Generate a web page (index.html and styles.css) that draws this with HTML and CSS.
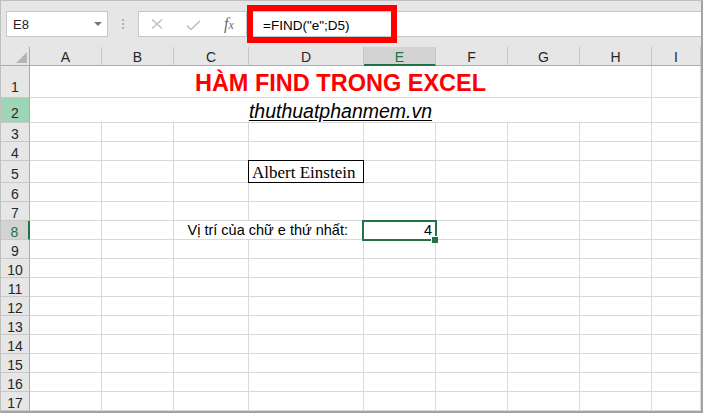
FILE: index.html
```html
<!DOCTYPE html>
<html lang="vi">
<head>
<meta charset="utf-8">
<title>HÀM FIND TRONG EXCEL</title>
<link rel="stylesheet" href="styles.css">
</head>
<body>
<div class="window">
  <div class="toolbar">
    <div class="namebox"><span>E8</span><span class="caret"></span></div>
    <div class="grip"><i></i><i></i><i></i></div>
    <div class="fxbox">
      <svg class="ico-x" width="12" height="12" viewBox="0 0 12 12"><path d="M1 1.5L11 10.5M11 1.5L1 10.5" stroke="#bdbdbd" stroke-width="1.4" fill="none"/></svg>
      <svg class="ico-check" width="15" height="11" viewBox="0 0 15 11"><path d="M1 5.5L5 9.5L14 1" stroke="#bdbdbd" stroke-width="1.6" fill="none"/></svg>
      <span class="fx">f<span class="fx-x">x</span></span>
    </div>
    <div class="formula"><span>=FIND("e";D5)</span><div class="mark"></div></div>
  </div>
  <div class="sheet">
    <div class="corner"><i></i></div>
    <div class="ch">A</div><div class="ch">B</div><div class="ch">C</div><div class="ch">D</div><div class="ch sel">E</div><div class="ch">F</div><div class="ch">G</div><div class="ch">H</div><div class="ch">I</div>

    <div class="rh r1">1</div><div class="c title">HÀM FIND TRONG EXCEL</div><div class="c"></div>
    <div class="rh hl r2">2</div><div class="c site"><span>thuthuatphanmem.vn</span></div><div class="c"></div>
    <div class="rh">3</div><div class="c"></div><div class="c"></div><div class="c"></div><div class="c"></div><div class="c"></div><div class="c"></div><div class="c"></div><div class="c"></div><div class="c"></div>
    <div class="rh">4</div><div class="c"></div><div class="c"></div><div class="c"></div><div class="c"></div><div class="c"></div><div class="c"></div><div class="c"></div><div class="c"></div><div class="c"></div>
    <div class="rh r5">5</div><div class="c"></div><div class="c"></div><div class="c"></div><div class="c boxed">Albert Einstein</div><div class="c"></div><div class="c"></div><div class="c"></div><div class="c"></div><div class="c"></div>
    <div class="rh">6</div><div class="c"></div><div class="c"></div><div class="c"></div><div class="c"></div><div class="c"></div><div class="c"></div><div class="c"></div><div class="c"></div><div class="c"></div>
    <div class="rh">7</div><div class="c"></div><div class="c"></div><div class="c"></div><div class="c"></div><div class="c"></div><div class="c"></div><div class="c"></div><div class="c"></div><div class="c"></div>
    <div class="rh sel">8</div><div class="c"></div><div class="c"></div><div class="c label">Vị trí của chữ e thứ nhất:</div><div class="c active">4</div><div class="c"></div><div class="c"></div><div class="c"></div><div class="c"></div>
    <div class="rh">9</div><div class="c"></div><div class="c"></div><div class="c"></div><div class="c"></div><div class="c"></div><div class="c"></div><div class="c"></div><div class="c"></div><div class="c"></div>
    <div class="rh">10</div><div class="c"></div><div class="c"></div><div class="c"></div><div class="c"></div><div class="c"></div><div class="c"></div><div class="c"></div><div class="c"></div><div class="c"></div>
    <div class="rh">11</div><div class="c"></div><div class="c"></div><div class="c"></div><div class="c"></div><div class="c"></div><div class="c"></div><div class="c"></div><div class="c"></div><div class="c"></div>
    <div class="rh">12</div><div class="c"></div><div class="c"></div><div class="c"></div><div class="c"></div><div class="c"></div><div class="c"></div><div class="c"></div><div class="c"></div><div class="c"></div>
    <div class="rh">13</div><div class="c"></div><div class="c"></div><div class="c"></div><div class="c"></div><div class="c"></div><div class="c"></div><div class="c"></div><div class="c"></div><div class="c"></div>
    <div class="rh">14</div><div class="c"></div><div class="c"></div><div class="c"></div><div class="c"></div><div class="c"></div><div class="c"></div><div class="c"></div><div class="c"></div><div class="c"></div>
    <div class="rh">15</div><div class="c"></div><div class="c"></div><div class="c"></div><div class="c"></div><div class="c"></div><div class="c"></div><div class="c"></div><div class="c"></div><div class="c"></div>
    <div class="rh">16</div><div class="c"></div><div class="c"></div><div class="c"></div><div class="c"></div><div class="c"></div><div class="c"></div><div class="c"></div><div class="c"></div><div class="c"></div>
    <div class="rh">17</div><div class="c"></div><div class="c"></div><div class="c"></div><div class="c"></div><div class="c"></div><div class="c"></div><div class="c"></div><div class="c"></div><div class="c"></div>
  </div>
</div>
</body>
</html>
```
FILE: styles.css
```css
* { box-sizing: border-box; }
body { margin: 0; background: #fff; font-family: "Liberation Sans", Arial, sans-serif; }

.window {
  width: 703px; height: 413px;
  border-style: solid; border-width: 1px 2px 2px 1px;
  border-color: #bfbfbf #a3a3a3 #a3a3a3 #bfbfbf;
  background: #e6e6e6;
  display: flex; flex-direction: column; overflow: hidden;
}

.toolbar { height: 46px; flex: none; display: flex; align-items: flex-start; padding: 10px 0 0 5px; }
.namebox {
  width: 102px; height: 26px; background: #fff; border: 1px solid #c6c6c6;
  display: flex; align-items: center; padding: 1px 5px 0 6px; font-size: 13px; color: #222;
}
.caret { margin-left: auto; width: 0; height: 0; border-left: 4px solid transparent; border-right: 4px solid transparent; border-top: 4px solid #777; margin-top: -2px; }
.grip { width: 30px; height: 26px; display: flex; flex-direction: column; align-items: center; justify-content: center; gap: 2px; }
.grip i { display: block; width: 2px; height: 2px; background: #b0b0b0; }
.fxbox {
  width: 109px; height: 26px; background: #fff; border: 1px solid #c6c6c6;
  display: flex; align-items: center; padding-left: 12px;
}
.ico-check { margin-left: 23px; margin-top: 2px; }
.fx { margin-left: 23px; font-family: "Liberation Serif", serif; font-style: italic; font-size: 16px; color: #6b6b6b; line-height: 16px; }
.fx-x { font-size: 12px; }
.formula {
  flex: 1; height: 26px; background: #fff; border: 1px solid #c6c6c6; border-right: none;
  position: relative; display: flex; align-items: center; padding: 2px 0 0 15px;
  font-size: 13.5px; color: #000;
}
.mark { position: absolute; left: -1px; top: -7px; width: 150px; height: 38px; border: 6px solid #ff0000; }

.sheet {
  flex: 1; display: grid;
  grid-template-columns: 29px 72px 72px 75px 115px 72px 72px 72px 72px 1fr;
  grid-template-rows: 19px 32px 25px 19px 19px 22px 19px 19px 19px repeat(9, 19px);
  background: #fff; font-size: 14.5px; color: #000;
}

.corner {
  background: #e6e6e6; border-right: 1px solid #ababab; border-bottom: 1px solid #ababab;
  display: flex; justify-content: flex-end; align-items: flex-end; padding: 0 2px 2px 0;
}
.corner i { display: block; width: 11px; height: 11px; background: #b5b5b5; clip-path: polygon(100% 0, 100% 100%, 0 100%); }

.ch {
  background: #e6e6e6; border-right: 1px solid #c6c6c6; border-bottom: 1px solid #ababab;
  display: flex; justify-content: center; align-items: flex-end; padding-bottom: 1px;
  font-size: 14px; line-height: 14px; color: #262626;
}
.ch.sel { background: #d3d3d3; color: #217346; border-bottom: 2px solid #217346; padding-bottom: 0; }

.rh {
  background: #e6e6e6; border-right: 1px solid #ababab; border-bottom: 1px solid #c8c8c8;
  display: flex; justify-content: center; align-items: flex-end;
  font-size: 14px; line-height: 14px; color: #262626;
}
.rh.r1 { padding-bottom: 3px; }
.rh.r2 { padding-bottom: 2px; }
.rh.r5 { padding-bottom: 1px; }
.rh.hl { background: #9fd5b7; }
.rh.sel { background: #d3d3d3; color: #217346; border-right: 2px solid #217346; }

.c {
  border-right: 1px solid #d9d9d9; border-bottom: 1px solid #d9d9d9;
  display: flex; align-items: flex-end; white-space: nowrap; min-width: 0;
  line-height: 15px; padding-bottom: 1px;
}
.title {
  grid-column: 2 / 10; justify-content: center;
  color: #ff0000; font-weight: bold; font-size: 23.5px; line-height: 24px; padding-bottom: 2px;
}
.site {
  grid-column: 2 / 10; justify-content: center;
  font-style: italic; font-size: 19.5px; line-height: 20px; padding-bottom: 1px;
}
.site span { text-decoration: underline; text-underline-offset: 2px; }
.boxed {
  position: relative; padding-left: 3px; padding-bottom: 1px;
  font-family: "Liberation Serif", "Times New Roman", serif; font-size: 17px; line-height: 17px;
}
.boxed::after { content: ""; position: absolute; left: -1px; top: -1px; right: -1px; bottom: -1px; border: 1px solid #000; }
.label { grid-column: 4 / 6; justify-content: flex-end; padding-right: 15px; }
.active { position: relative; justify-content: flex-end; padding-right: 3px; }
.active::after { content: ""; position: absolute; left: -2px; top: -1px; right: -2px; bottom: -2px; border: 2px solid #217346; }
.active::before {
  content: ""; position: absolute; right: -3px; bottom: -4px; width: 6px; height: 6px;
  background: #217346; border-left: 1px solid #fff; border-top: 1px solid #fff; z-index: 1;
}
```
